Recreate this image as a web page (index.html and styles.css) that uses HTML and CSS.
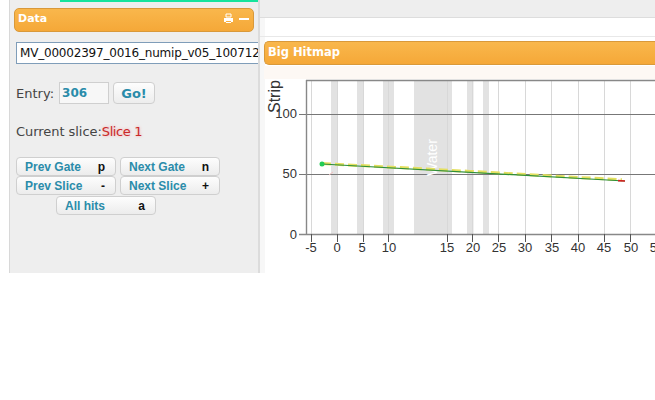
FILE: index.html
```html
<!DOCTYPE html>
<html>

<head>
    <title>Big Hitmap</title>
    <link rel="stylesheet" href="styles.css">
</head>

<body>
    <div class="page">
        <div class="side">
            <div class="loading-bar"></div>
            <div class="panel-header data-header">
                <span class="header-title">Data</span>
                <span class="header-icons">
                    <svg width="11" height="11" viewBox="0 0 11 11">
                        <path d="M3 1h5v3H3z" fill="none" stroke="#fff" stroke-width="1"/>
                        <path d="M1 5h9v4H8v-1H3v1H1z" fill="#fff"/>
                        <path d="M3 9h5v1H3z" fill="#fff"/>
                    </svg>
                    <span class="minus"></span>
                </span>
            </div>
            <div class="file-name">MV_00002397_0016_numip_v05_100712</div>
            <div class="entry-row">
                <span>Entry:</span>
                <span class="entry-box">306</span>
                <button class="go-button">Go!</button>
            </div>
            <div class="slice-row">Current slice:<span class="slice-name">Slice 1</span></div>
            <div class="nav-buttons">
                <button class="nav-button"><span>Prev Gate</span><b>p</b></button>
                <button class="nav-button"><span>Next Gate</span><b>n</b></button>
                <button class="nav-button"><span>Prev Slice</span><b>-</b></button>
                <button class="nav-button"><span>Next Slice</span><b>+</b></button>
                <button class="nav-button all-hits"><span>All hits</span><b>a</b></button>
            </div>
        </div>
        <div class="main">
            <div class="top-band"></div>
            <div class="hitmap-box">
                <div class="panel-header hitmap-header"><span class="header-title">Big Hitmap</span></div>
            </div>
            <svg class="plot" width="391" height="207" viewBox="264 65 391 207">
                <rect x="264" y="66" width="391" height="13" fill="#fdf8f4"/>
                <g fill="#e2e2e2">
                    <rect x="331" y="80" width="7" height="154"/>
                    <rect x="357" y="80" width="6.5" height="154"/>
                    <rect x="383" y="80" width="11" height="154"/>
                    <rect x="414" y="80" width="38" height="154"/>
                    <rect x="467" y="80" width="6.5" height="154"/>
                    <rect x="483" y="80" width="6" height="154"/>
                </g>
                <g stroke="#d8d8d8" stroke-width="1">
                    <path d="M311.5 80V234M337.5 80V234M363.5 80V234M388.5 80V234M447.5 80V234M472.5 80V234M498.5 80V234M525.5 80V234M551.5 80V234M578.5 80V234M604.5 80V234M630.5 80V234"/>
                </g>
                <g stroke="#777" stroke-width="1">
                    <path d="M299 114.5H655M299 174.5H655"/>
                </g>
                <text class="water" transform="translate(437 176) rotate(-90)">Water</text>
                <path d="M322 163.6L400 167.6L470 171.4L540 175.4L622 179.8" fill="none" stroke="#e4e060" stroke-width="3" stroke-dasharray="9 4"/>
                <path d="M322 164L625 181" stroke="#2f8f3a" stroke-width="1.2"/>
                <path d="M618 180.6L625 181" stroke="#d42020" stroke-width="1.6"/>
                <path d="M329 175L333 172" stroke="#f0c0c0" stroke-width="1"/>
                <circle cx="322" cy="164" r="2.5" fill="#22cc55"/>
                <path d="M306 80.5H655M306.5 80V234.5M299 234.5H655" fill="none" stroke="#888" stroke-width="1.4"/>
                <g stroke="#555" stroke-width="1">
                    <path d="M311.5 234V242M337.5 234V242M363.5 234V242M388.5 234V242M447.5 234V242M472.5 234V242M498.5 234V242M525.5 234V242M551.5 234V242M578.5 234V242M604.5 234V242M630.5 234V242"/>
                </g>
                <g class="tick-y">
                    <text x="297" y="118">100</text>
                    <text x="297" y="178">50</text>
                    <text x="297" y="239">0</text>
                </g>
                <g class="tick-x">
                    <text x="311" y="252">-5</text>
                    <text x="337" y="252">0</text>
                    <text x="362" y="252">5</text>
                    <text x="389" y="252">10</text>
                    <text x="447" y="252">15</text>
                    <text x="473" y="252">20</text>
                    <text x="499" y="252">25</text>
                    <text x="525" y="252">30</text>
                    <text x="552" y="252">35</text>
                    <text x="578" y="252">40</text>
                    <text x="604" y="252">45</text>
                    <text x="631" y="252">50</text>
                    <text x="657" y="252">55</text>
                </g>
                <text class="axis-title" transform="translate(280 113) rotate(-90)">Strip</text>
            </svg>
        </div>
    </div>
</body>

</html>
```

FILE: styles.css
```css
body {
    margin: 0;
    background-color: #fff;
    font-family: "DejaVu Sans", sans-serif;
}

.page {
    display: flex;
    height: 273px;
    overflow: hidden;
}

.side {
    box-sizing: border-box;
    flex: none;
    width: 251px;
    height: 273px;
    margin-left: 9px;
    padding: 0 0 0 4px;
    background-color: #eeeeee;
    border-left: 1px solid #d8d8d8;
    border-right: 2px solid #dcdcdc;
    color: #444;
    font-size: 13px;
    overflow: hidden;
}

.loading-bar {
    height: 2px;
    margin-left: 46px;
    margin-right: -4px;
    background-color: #16e39c;
}

.panel-header {
    box-sizing: border-box;
    display: flex;
    align-items: center;
    justify-content: space-between;
    height: 24px;
    padding: 0 4px 0 3px;
    background: linear-gradient(#f9b74c, #f5a838);
    border: 1px solid #d9993a;
    color: #fff;
    font-size: 11px;
    font-weight: bold;
}

.header-title {
    margin-top: -3px;
}

.data-header {
    width: 240px;
    margin-top: 6px;
    border-radius: 5px;
}

.header-icons {
    display: flex;
    align-items: center;
    gap: 5px;
    margin-top: -3px;
}

.minus {
    width: 10px;
    height: 2px;
    background-color: #fff;
}

.file-name {
    box-sizing: border-box;
    width: 246px;
    height: 22px;
    margin: 10px 0 0 2px;
    padding: 3px;
    background-color: #fff;
    border: 1px solid #7f9db9;
    color: #111;
    font-size: 12px;
    letter-spacing: -0.2px;
    line-height: 15px;
    white-space: nowrap;
    overflow: hidden;
}

.entry-row {
    display: flex;
    align-items: center;
    height: 22px;
    margin: 18px 0 0 2px;
}

.entry-box {
    box-sizing: border-box;
    width: 50px;
    height: 22px;
    margin-left: 5px;
    padding-left: 2px;
    background-color: #f7f7f7;
    border: 1px solid #cfcfcf;
    color: #2a8caa;
    font-weight: bold;
    font-size: 12px;
    line-height: 20px;
}

.go-button {
    width: 42px;
    height: 22px;
    margin-left: 4px;
    padding: 0;
    background: linear-gradient(#fdfdfd, #ededed);
    border: 1px solid #cfcfcf;
    border-radius: 4px;
    color: #2a8caa;
    font-family: "DejaVu Sans", sans-serif;
    font-weight: bold;
    font-size: 13px;
}

.slice-row {
    margin: 19px 0 0 2px;
    line-height: 17px;
    letter-spacing: -0.05px;
}

.slice-name {
    color: #c92a2a;
    letter-spacing: -0.4px;
    text-shadow: 0 0 3px #f3a0a0;
}

.nav-buttons {
    display: grid;
    grid-template-columns: 100px 100px;
    grid-auto-rows: 19px;
    column-gap: 4px;
    row-gap: 0;
    margin: 17px 0 0 2px;
}

.nav-button {
    display: flex;
    align-items: center;
    justify-content: space-between;
    padding: 0 10px 0 8px;
    background: linear-gradient(#fdfdfd, #ececec);
    border: 1px solid #cfcfcf;
    border-radius: 4px;
    font-family: "Liberation Sans", sans-serif;
    font-size: 12px;
    font-weight: bold;
    color: #2a8caa;
}

.nav-button b {
    color: #111;
}

.all-hits {
    grid-column: 1 / 3;
    width: 100px;
    margin: 1px 0 -1px 40px;
}

.main {
    flex: 1;
    min-width: 0;
    background: linear-gradient(90deg, #f7f7f7 5px, #fff 5px);
    overflow: hidden;
}

.top-band {
    height: 17px;
    background-color: #eeeeee;
    border-bottom: 1px solid #dddddd;
    margin-bottom: 18px;
}

.hitmap-box {
    padding-top: 4px;
    border-top: 1px solid #e8e8e8;
}

.hitmap-header {
    height: 24px;
    margin-left: 4px;
    border-width: 1px 0 1px 1px;
    border-radius: 5px 0 0 5px;
    font-size: 11.5px;
}

.plot {
    display: block;
    margin: 0 0 0 4px;
}

.plot text {
    font-family: "Liberation Sans", sans-serif;
    font-size: 13px;
    fill: #333;
}

.tick-y text {
    text-anchor: end;
}

.tick-x text {
    text-anchor: middle;
}

.plot .axis-title {
    font-size: 16px;
}

.plot .water {
    font-size: 14px;
    fill: #fff;
}
```
